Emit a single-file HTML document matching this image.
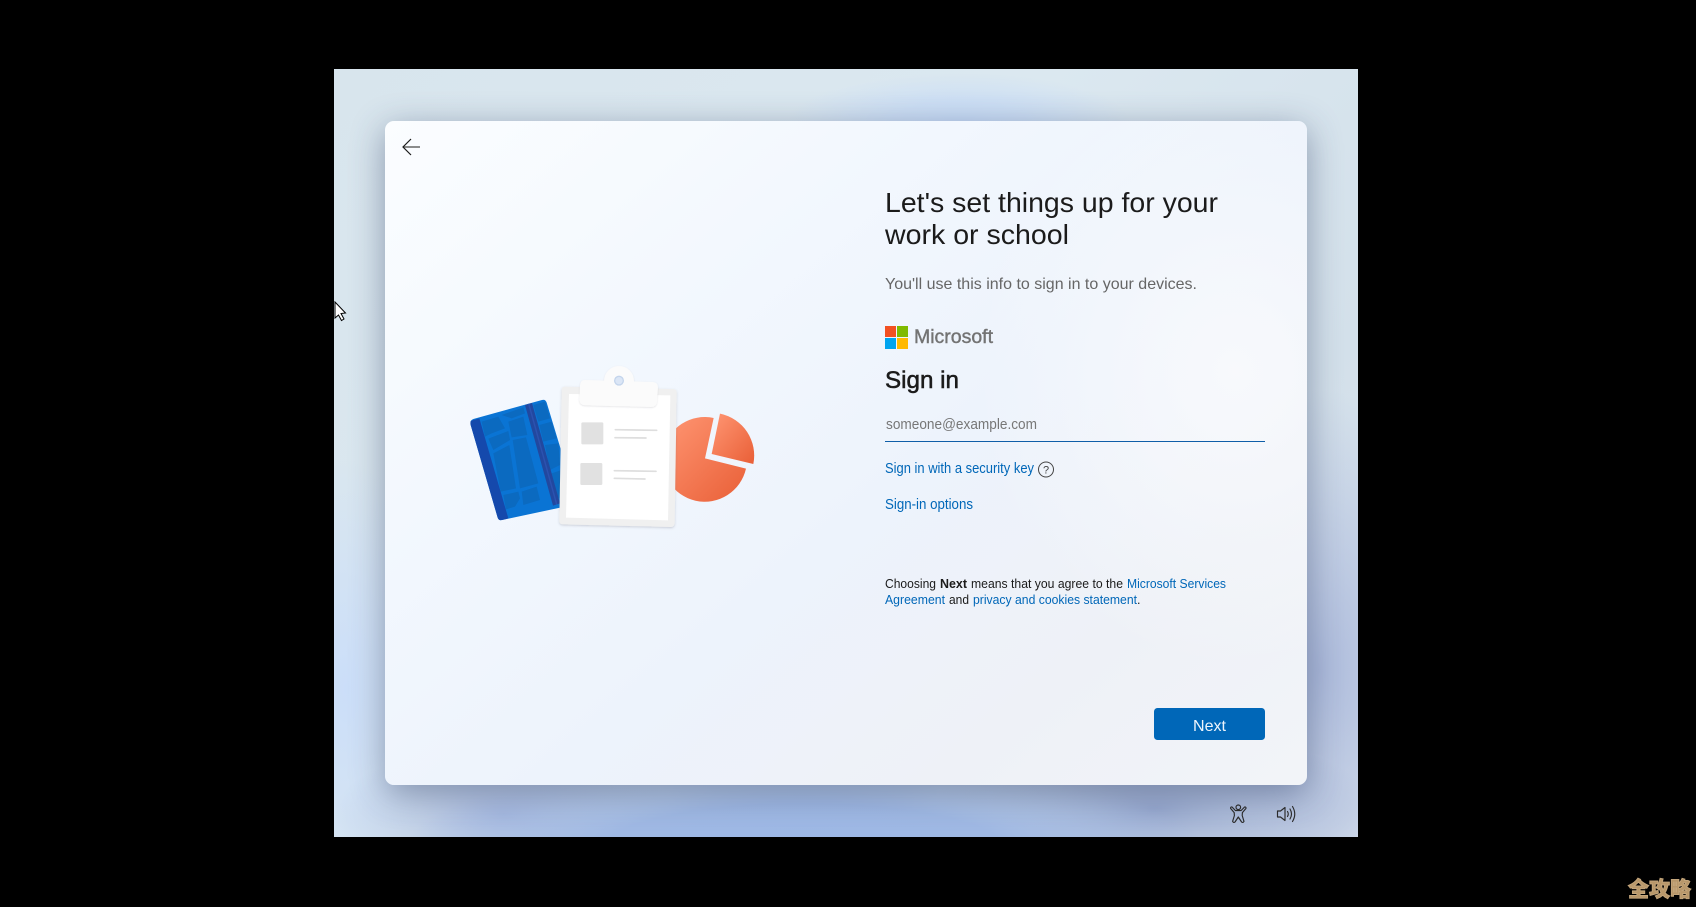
<!DOCTYPE html>
<html lang="en"><head><meta charset="utf-8"><title>Sign in</title>
<style>
html,body{margin:0;padding:0;width:1696px;height:907px;background:#000;overflow:hidden}
#screen{position:absolute;left:334px;top:69px;width:1024px;height:768px;overflow:hidden;
background:
radial-gradient(ellipse 170px 48px at 625px 52px,#c8dcf6 0%,rgba(200,220,246,.75) 40%,rgba(200,220,246,0) 100%),
radial-gradient(ellipse 400px 90px at 470px 780px,#9db8e6 0%,#a0b9e4 50%,rgba(160,185,228,0) 100%),
radial-gradient(ellipse 220px 80px at 820px 740px,#98a9cf 0%,rgba(152,169,207,0) 100%),
radial-gradient(ellipse 170px 70px at 170px 745px,#a9badf 0%,rgba(169,186,223,0) 100%),
radial-gradient(ellipse 90px 230px at 12px 620px,#cbdef9 0%,rgba(203,222,249,0) 100%),
radial-gradient(ellipse 150px 280px at 985px 600px,#acbadb 0%,rgba(172,186,219,0) 100%),
linear-gradient(135deg,#d8e5ed 0%,#dbe8f0 40%,#d3e0ea 72%,#dde6f0 100%)}
#card{position:absolute;left:51px;top:52px;width:922px;height:664px;border-radius:9px;
background:
radial-gradient(ellipse 260px 300px at 850px 250px,rgba(250,251,253,.8) 0%,rgba(250,251,253,0) 100%),
linear-gradient(140deg,#fbfdff 0%,#f3f8fe 28%,#edf3fc 55%,#eef1f7 78%,#f2f4f8 100%);
box-shadow:0 8px 34px rgba(40,55,95,.45)}
svg{position:absolute;left:0;top:0}
text{font-family:"Liberation Sans",sans-serif}
</style></head><body>
<div id="screen"><div id="card"></div></div>
<svg width="1696" height="907" viewBox="0 0 1696 907" xmlns="http://www.w3.org/2000/svg">
<defs>
<linearGradient id="p" x1="0" y1="0" x2="1" y2="1"><stop offset="0" stop-color="#ff9673"/><stop offset="1" stop-color="#e95f37"/></linearGradient>
<filter id="s" x="-10%" y="-10%" width="120%" height="120%"><feDropShadow dx="0" dy="3" stdDeviation="3" flood-color="#556" flood-opacity=".25"/></filter>
<filter id="s2" x="-15%" y="-30%" width="130%" height="170%"><feDropShadow dx="0" dy="2" stdDeviation="2.5" flood-color="#667" flood-opacity=".2"/></filter>
<clipPath id="nb"><path d="M100,207 L306,150 Q316,147 320,158 L412,462 L186,510 Q176,513 173,503 L92,225 Q88,212 100,207Z"/></clipPath>
</defs>

<!-- illustration -->
<g transform="translate(440,350) scale(.33333)">
<path d="M795,325 L821,204 A127,127 0 1 0 918,356 Z" fill="url(#p)"/>
<path d="M815,312 L840,191 A128,128 0 0 1 940,342 Z" fill="url(#p)"/>
<g clip-path="url(#nb)">
<rect x="60" y="130" width="380" height="400" fill="#0a74d4"/>
<g fill="#0b6ac0">
<path d="M125,215 L175,200 L195,235 L155,250 L135,260Z"/>
<path d="M185,195 L250,172 L255,190 L215,205Z"/>
<path d="M205,215 L250,200 L262,255 L215,262Z"/>
<path d="M145,266 L205,243 L210,270 L160,300Z"/>
<path d="M160,310 L208,285 L228,415 L182,425Z"/>
<path d="M218,270 L258,262 L295,400 L240,415Z"/>
<path d="M190,435 L235,425 L240,445 L225,470 L198,478Z"/>
<path d="M245,425 L290,410 L300,450 L250,465Z"/>
<path d="M280,165 L315,155 L330,205 L295,215Z"/>
<path d="M298,225 L335,215 L350,265 L310,275Z"/>
<path d="M315,285 L355,280 L360,345 L330,360Z"/>
<path d="M335,370 L365,360 L365,440 L355,445Z"/>
</g>
<path d="M88,214 L118,205 L205,505 L175,515Z" fill="#1549ac"/>
<path d="M255,165 L276,159 L360,460 L339,467Z" fill="#22489f"/>
<path d="M264,162 L268,160 L352,462 L348,464Z" fill="#2c52b0"/>
</g>
<g filter="url(#s)"><path d="M376,110 L700,117 Q711,118 710,129 L704,520 Q703,531 692,531 L368,523 Q357,522 358,511 L365,120 Q365,110 376,110Z" fill="#f0f0f0"/></g>
<path d="M387,132 L691,136 L684,511 L378,503Z" fill="#fff"/>
<rect x="424" y="217" width="66" height="66" rx="4" fill="#e1e1e1"/>
<rect x="421" y="339" width="66" height="66" rx="4" fill="#e1e1e1"/>
<g stroke="#dedede" stroke-width="5" stroke-linecap="round"><path d="M526,239 L650,241"/><path d="M525,263 L618,264"/><path d="M523,362 L648,364"/><path d="M523,385 L615,387"/></g>
<g filter="url(#s2)">
<circle cx="537" cy="93" r="45" fill="#fbfbfb"/>
<path d="M435,90 L638,96 Q654,97 654,112 L651,155 Q650,171 634,171 L436,166 Q418,165 418,148 L420,106 Q421,90 435,90Z" fill="#fbfbfb"/>
</g>
<circle cx="537" cy="92" r="15" fill="#c4d5ec"/><circle cx="537" cy="92" r="11" fill="#dbe6f6"/>
</g>

<!-- back arrow -->
<path d="M403,147 H420" stroke="#666" stroke-width="1.6"/>
<path d="M411,139 L403,147 L411,155" fill="none" stroke="#1a1a1a" stroke-width="1.2"/>

<!-- text -->
<text x="885" y="212" font-size="28" fill="#1b1b1b" textLength="333" lengthAdjust="spacingAndGlyphs">Let's set things up for your</text>
<text x="885" y="244" font-size="28" fill="#1b1b1b" textLength="184" lengthAdjust="spacingAndGlyphs">work or school</text>
<text x="885" y="289" font-size="16" fill="#666" textLength="312" lengthAdjust="spacingAndGlyphs">You'll use this info to sign in to your devices.</text>

<rect x="885" y="326" width="11" height="11" fill="#f25022"/><rect x="897" y="326" width="11" height="11" fill="#7fba00"/>
<rect x="885" y="338" width="11" height="11" fill="#00a4ef"/><rect x="897" y="338" width="11" height="11" fill="#ffb900"/>
<text x="914" y="343" font-size="19" fill="#737373" stroke="#737373" stroke-width=".4" textLength="79" lengthAdjust="spacingAndGlyphs">Microsoft</text>
<text x="885" y="388" font-size="24" fill="#1b1b1b" stroke="#1b1b1b" stroke-width=".55" textLength="74" lengthAdjust="spacingAndGlyphs">Sign in</text>
<text x="886" y="429" font-size="14.5" fill="#777" textLength="151" lengthAdjust="spacingAndGlyphs">someone@example.com</text>
<rect x="885" y="441" width="380" height="1" fill="#0f5ea8"/>
<text x="885" y="473" font-size="14.5" fill="#0067b8" textLength="149" lengthAdjust="spacingAndGlyphs">Sign in with a security key</text>
<circle cx="1046" cy="469.5" r="7.5" fill="none" stroke="#444" stroke-width="1"/>
<text x="1046" y="473.5" font-size="11" fill="#444" text-anchor="middle">?</text>
<text x="885" y="509" font-size="14.5" fill="#0067b8" textLength="88" lengthAdjust="spacingAndGlyphs">Sign-in options</text>

<text x="885" y="588" font-size="12.5" fill="#1b1b1b" textLength="51" lengthAdjust="spacingAndGlyphs">Choosing</text>
<text x="940" y="588" font-size="12.5" font-weight="700" fill="#1b1b1b" textLength="27" lengthAdjust="spacingAndGlyphs">Next</text>
<text x="971" y="588" font-size="12.5" fill="#1b1b1b" textLength="152" lengthAdjust="spacingAndGlyphs">means that you agree to the</text>
<text x="1127" y="588" font-size="12.5" fill="#0067b8" textLength="99" lengthAdjust="spacingAndGlyphs">Microsoft Services</text>
<text x="885" y="604" font-size="12.5" fill="#0067b8" textLength="60" lengthAdjust="spacingAndGlyphs">Agreement</text>
<text x="949" y="604" font-size="12.5" fill="#1b1b1b" textLength="20" lengthAdjust="spacingAndGlyphs">and</text>
<text x="973" y="604" font-size="12.5" fill="#0067b8" textLength="164" lengthAdjust="spacingAndGlyphs">privacy and cookies statement</text>
<text x="1137" y="604" font-size="12.5" fill="#1b1b1b">.</text>

<!-- next button -->
<rect x="1154" y="708" width="111" height="32" rx="3.5" fill="#0067b8"/>
<text x="1193" y="731" font-size="16" fill="#eef5fc" textLength="33" lengthAdjust="spacingAndGlyphs">Next</text>

<!-- accessibility icon -->
<g fill="none" stroke="#2b2b2b" stroke-width="1.15" stroke-linejoin="round" stroke-linecap="round">
<circle cx="1238.3" cy="807.3" r="2.3"/>
<path d="M1232,807 L1235.5,810.6 H1241 L1244.6,807 Q1246.2,806.8 1246,808.4 L1242.4,812.6 L1242.2,815.5 L1244,821.4 Q1243,823.2 1241.6,822 L1238.3,817 L1235,822 Q1233.6,823.2 1232.6,821.4 L1234.4,815.5 L1234.2,812.6 L1230.6,808.4 Q1230.4,806.8 1232,807Z"/>
<!-- speaker icon -->
<path d="M1277.5,811 H1280.5 L1285,807.5 V820.5 L1280.5,817 H1277.5Z"/>
<path d="M1287.5,811.5 Q1289,814 1287.5,816.5"/>
<path d="M1290,809 Q1293,814 1290,819"/>
<path d="M1292.5,806.5 Q1297,814 1292.5,821.5"/>
</g>

<!-- cursor -->
<path d="M335,302 L345.5,313 L341,313.5 L344,319 L341.5,320.5 L338.5,315 L335,318Z" fill="#fff" stroke="#000" stroke-width="1"/>

<!-- watermark -->
<text x="1628" y="896.5" font-size="21" font-weight="900" fill="#b8976a" stroke="#c4a67c" stroke-width=".9" style='font-family:"Noto Sans CJK SC",sans-serif'>全攻略</text>
</svg>
</body></html>
